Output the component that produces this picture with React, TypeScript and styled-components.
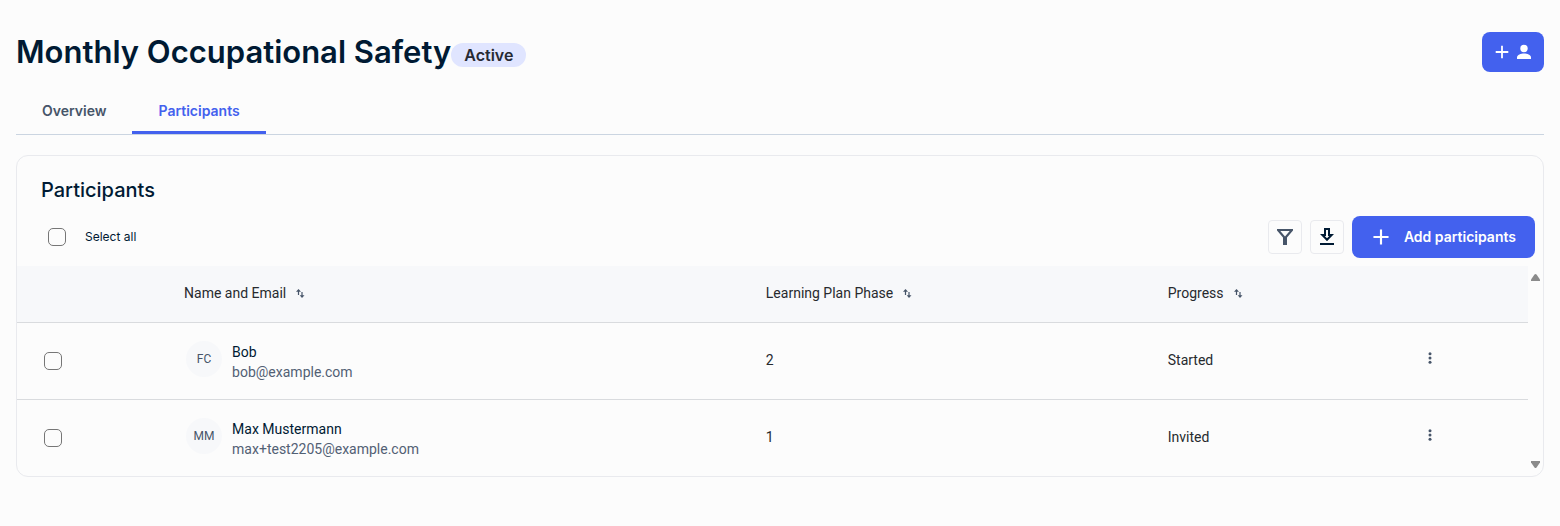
import React from "react";
import styled, { createGlobalStyle } from "styled-components";

const GlobalStyle = createGlobalStyle`
  *, *::before, *::after { box-sizing: border-box; }
  body {
    margin: 0;
    background: #fcfcfc;
    color: #001a33;
    font-family: Inter, "Liberation Sans", sans-serif;
  }
  button, input { font: inherit; margin: 0; }
  button { cursor: pointer; }
`;

const Page = styled.main`
  padding: 32px 16px;
`;

const PageHeader = styled.header`
  display: flex;
  align-items: center;
  justify-content: space-between;
  height: 40px;
`;

const TitleGroup = styled.div`
  display: flex;
  align-items: center;
`;

const PageTitle = styled.h1`
  margin: 0;
  font-size: 31px;
  line-height: 40px;
  font-weight: 600;
`;

const StatusBadge = styled.span`
  margin-top: 6px;
  padding: 0 13px;
  border-radius: 12px;
  background: #e0e5ff;
  color: #272a33;
  font-size: 16px;
  line-height: 24px;
  font-weight: 600;
`;

const PrimaryButton = styled.button<{ $compact?: boolean }>`
  display: flex;
  align-items: center;
  justify-content: center;
  gap: ${(p) => (p.$compact ? 2 : 11)}px;
  height: ${(p) => (p.$compact ? 40 : 42)}px;
  padding: ${(p) => (p.$compact ? "0 10px" : "0 19px 0 17px")};
  border: 0;
  border-radius: 8px;
  background: #4361ee;
  color: #fff;
  font-size: 14px;
  line-height: 20px;
  font-weight: 600;
`;

const Tabs = styled.nav`
  display: flex;
  margin-top: 16px;
  border-bottom: 1px solid #cbd5e1;
`;

const Tab = styled.a<{ $active?: boolean }>`
  padding: 13px 26px 10px;
  border-bottom: 3px solid ${(p) => (p.$active ? "#4361ee" : "transparent")};
  color: ${(p) => (p.$active ? "#4361ee" : "#475569")};
  font-size: 14px;
  line-height: 20px;
  font-weight: 600;
  text-decoration: none;
`;

const Card = styled.section`
  margin-top: 20px;
  overflow: hidden;
  border: 1px solid #e9eaee;
  border-radius: 12px;
`;

const CardTitle = styled.h2`
  margin: 0;
  padding: 20px 24px 12px;
  font-size: 20px;
  line-height: 28px;
  font-weight: 500;
`;

const Toolbar = styled.div`
  display: flex;
  align-items: center;
  justify-content: space-between;
  padding: 0 8px 8px 31px;
`;

const SelectAll = styled.label`
  display: flex;
  align-items: center;
  gap: 19px;
  font-size: 12px;
  line-height: 16px;
`;

const Checkbox = styled.input.attrs({ type: "checkbox" })`
  appearance: none;
  display: block;
  width: 18px;
  height: 18px;
  border: 1px solid #767676;
  border-radius: 5px;
  background: transparent;
  &:checked { background: #4361ee; }
`;

const ToolbarActions = styled.div`
  display: flex;
  align-items: center;
  gap: 8px;
`;

const IconButton = styled.button`
  display: flex;
  align-items: center;
  justify-content: center;
  width: 34px;
  height: 34px;
  padding: 0;
  border: 1px solid #e9eaee;
  border-radius: 4px;
  background: transparent;
`;

const TableArea = styled.div`
  display: flex;
`;

const Table = styled.table`
  flex: 1;
  border-collapse: separate;
  border-spacing: 0;
  table-layout: fixed;
  color: #272a2e;
  font-family: Roboto, "Liberation Sans", sans-serif;
  font-size: 14px;
  line-height: 20px;
`;

const Col = styled.col<{ $width: string }>`
  width: ${(p) => p.$width};
`;

const HeadCell = styled.th`
  height: 57px;
  padding: 0 16px 2px;
  border-bottom: 1px solid #d9dbde;
  background: #f7f8fa;
  font-weight: 400;
  text-align: left;
`;

const SortButton = styled.button`
  display: flex;
  align-items: center;
  gap: 10px;
  padding: 0;
  border: 0;
  background: transparent;
  color: inherit;
`;

const Cell = styled.td<{ $select?: boolean }>`
  height: 77px;
  padding: ${(p) => (p.$select ? "0 27px" : "0 16px 2px")};
  border-bottom: 1px solid #d9dbde;
`;

const Row = styled.tr`
  &:last-child ${Cell} {
    height: 76px;
    border-bottom: 0;
  }
`;

const Person = styled.div`
  display: flex;
  align-items: center;
  gap: 10px;
  padding-left: 2px;
  margin-bottom: 2px;
`;

const Avatar = styled.span`
  display: flex;
  align-items: center;
  justify-content: center;
  width: 36px;
  height: 36px;
  border-radius: 50%;
  background: #f7f8fa;
  color: #475569;
  font-size: 12px;
`;

const PersonText = styled.div`
  display: flex;
  flex-direction: column;
  padding-top: 6px;
`;

const Name = styled.span`
  color: #001a33;
`;

const Email = styled.span`
  color: #526074;
`;

const MenuButton = styled.button`
  display: flex;
  margin-bottom: 4px;
  padding: 0;
  border: 0;
  background: transparent;
  color: #475569;
`;

const ScrollRail = styled.div`
  display: flex;
  flex-direction: column;
  align-items: center;
  justify-content: space-between;
  width: 15px;
  padding: 8px 0;
`;

const PlusIcon = ({ size }: { size: number }) => (
  <svg width={size} height={size} viewBox="0 0 20 20" fill="none" stroke="currentColor" strokeWidth="1.8" aria-hidden="true">
    <path d="M10 3.700v12.600M3.700 10h12.600" />
  </svg>
);

const PersonIcon = () => (
  <svg width="20" height="20" viewBox="0 0 20 20" fill="currentColor" aria-hidden="true">
    <circle cx="10" cy="6.500" r="3.700" />
    <path d="M10 11.500c-3 0-7 1.300-7 3.800v1.700h14v-1.700c0-2.500-4-3.800-7-3.800z" />
  </svg>
);

const FilterIcon = () => (
  <svg width="18" height="18" viewBox="0 0 18 18" fill="#475569" fillRule="evenodd" aria-hidden="true">
    <path d="M1 1h16v1.600l-6 7V17H7V9.600l-6-7zM4.300 3L9 8.500 13.700 3z" />
  </svg>
);

const DownloadIcon = () => (
  <svg width="18" height="18" viewBox="0 0 18 18" fill="#001a33" fillRule="evenodd" aria-hidden="true">
    <path d="M6 0h6v6h4l-7 7.200L2 6h4zM8 2v6H6.800L9 10.300 11.200 8H10V2z" />
    <path d="M2 15h14v2H2z" />
  </svg>
);

const SortIcon = () => (
  <svg width="9" height="10" viewBox="0 0 9 10" fill="#475569" aria-hidden="true">
    <path d="M2.500 1L5 3.700H3.100V7H1.900V3.700H0z" />
    <path d="M6 10L3.700 7.300h1.700V4h1.200v3.300h1.900z" />
  </svg>
);

const MoreIcon = () => (
  <svg width="16" height="16" viewBox="0 0 16 16" fill="currentColor" aria-hidden="true">
    <circle cx="8" cy="3.700" r="1.500" />
    <circle cx="8" cy="8" r="1.500" />
    <circle cx="8" cy="12.300" r="1.500" />
  </svg>
);

const ScrollArrow = ({ down }: { down?: boolean }) => (
  <svg width="9" height="7" viewBox="0 0 9 7" fill="#8b8b8b" aria-hidden="true">
    <path d={down ? "M0 0h9v1.500L5.500 6.500Q4.500 7.500 3.500 6.500L0 1.500z" : "M0 7h9V5.500L5.500 .5Q4.500-.5 3.500 .5L0 5.500z"} />
  </svg>
);

const participants = [
  { initials: "FC", name: "Bob", email: "bob@example.com", phase: 2, progress: "Started" },
  { initials: "MM", name: "Max Mustermann", email: "max+test2205@example.com", phase: 1, progress: "Invited" },
];

export default function App() {
  return (
    <>
      <GlobalStyle />
      <Page>
        <PageHeader>
          <TitleGroup>
            <PageTitle>Monthly Occupational Safety</PageTitle>
            <StatusBadge>Active</StatusBadge>
          </TitleGroup>
          <PrimaryButton $compact type="button" aria-label="Add person">
            <PlusIcon size={20} />
            <PersonIcon />
          </PrimaryButton>
        </PageHeader>
        <Tabs>
          <Tab href="#overview">Overview</Tab>
          <Tab href="#participants" $active aria-current="page">Participants</Tab>
        </Tabs>
        <Card>
          <CardTitle>Participants</CardTitle>
          <Toolbar>
            <SelectAll>
              <Checkbox />
              Select all
            </SelectAll>
            <ToolbarActions>
              <IconButton type="button" aria-label="Filter"><FilterIcon /></IconButton>
              <IconButton type="button" aria-label="Download"><DownloadIcon /></IconButton>
              <PrimaryButton type="button">
                <PlusIcon size={24} />
                Add participants
              </PrimaryButton>
            </ToolbarActions>
          </Toolbar>
          <TableArea>
            <Table>
              <colgroup>
                <Col $width="10%" />
                <Col $width="38.5%" />
                <Col $width="26.6%" />
                <Col $width="16.8%" />
                <Col $width="8.1%" />
              </colgroup>
              <thead>
                <tr>
                  <HeadCell aria-label="Selection" />
                  {["Name and Email", "Learning Plan Phase", "Progress"].map((label) => (
                    <HeadCell key={label}>
                      <SortButton type="button">{label}<SortIcon /></SortButton>
                    </HeadCell>
                  ))}
                  <HeadCell aria-label="Actions" />
                </tr>
              </thead>
              <tbody>
                {participants.map((p) => (
                  <Row key={p.email}>
                    <Cell $select><Checkbox aria-label={`Select ${p.name}`} /></Cell>
                    <Cell>
                      <Person>
                        <Avatar>{p.initials}</Avatar>
                        <PersonText>
                          <Name>{p.name}</Name>
                          <Email>{p.email}</Email>
                        </PersonText>
                      </Person>
                    </Cell>
                    <Cell>{p.phase}</Cell>
                    <Cell>{p.progress}</Cell>
                    <Cell>
                      <MenuButton type="button" aria-label={`Actions for ${p.name}`}><MoreIcon /></MenuButton>
                    </Cell>
                  </Row>
                ))}
              </tbody>
            </Table>
            <ScrollRail>
              <ScrollArrow />
              <ScrollArrow down />
            </ScrollRail>
          </TableArea>
        </Card>
      </Page>
    </>
  );
}
